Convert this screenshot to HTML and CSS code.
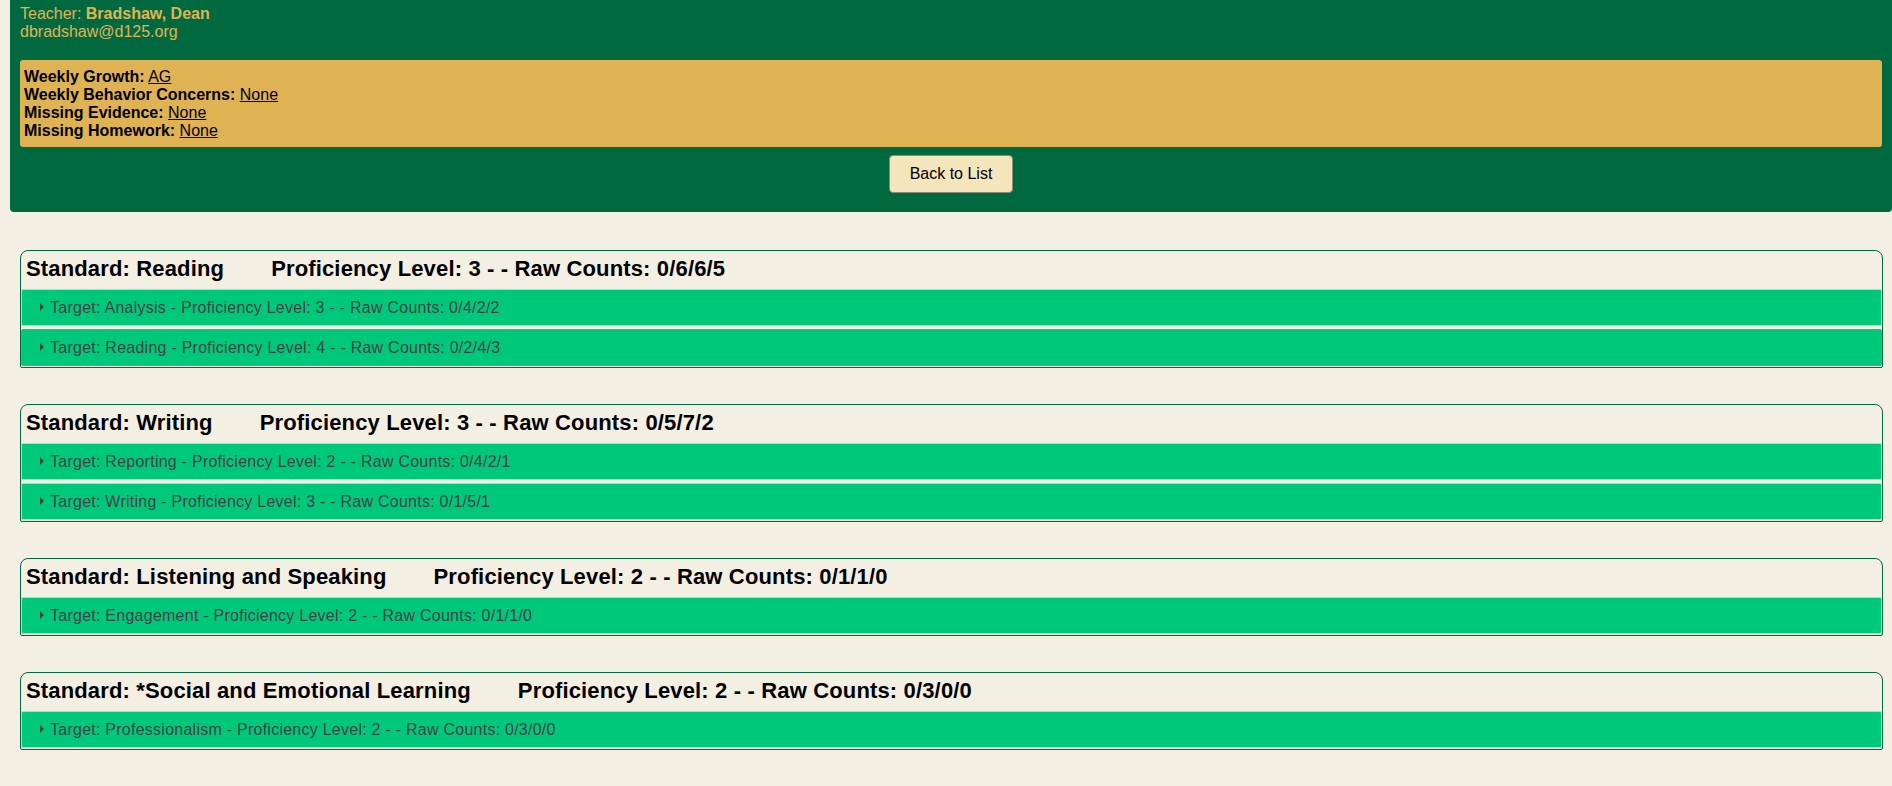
FILE: index.html
```html
<!DOCTYPE html>
<html lang="en">
<head>
<meta charset="utf-8">
<title>Student Standards</title>
<link rel="stylesheet" href="styles.css">
</head>
<body>
<div class="header">
  <div class="teacher">Teacher: <b>Bradshaw, Dean</b></div>
  <div class="teacher">dbradshaw@d125.org</div>
  <div class="alerts">
    <div><b>Weekly Growth:</b> <a href="#">AG</a></div>
    <div><b>Weekly Behavior Concerns:</b> <a href="#">None</a></div>
    <div><b>Missing Evidence:</b> <a href="#">None</a></div>
    <div><b>Missing Homework:</b> <a href="#">None</a></div>
  </div>
  <div class="actions"><button class="back">Back to List</button></div>
</div>

<div class="standards">
  <div class="card">
    <div class="card-head">Standard: Reading<span class="prof">Proficiency Level: 3 - - Raw Counts: 0/6/6/5</span></div>
    <div class="target"><span class="caret"></span>Target: Analysis - Proficiency Level: 3 - - Raw Counts: 0/4/2/2</div>
    <div class="target focused"><span class="caret"></span>Target: Reading - Proficiency Level: 4 - - Raw Counts: 0/2/4/3</div>
  </div>
  <div class="card">
    <div class="card-head">Standard: Writing<span class="prof">Proficiency Level: 3 - - Raw Counts: 0/5/7/2</span></div>
    <div class="target"><span class="caret"></span>Target: Reporting - Proficiency Level: 2 - - Raw Counts: 0/4/2/1</div>
    <div class="target"><span class="caret"></span>Target: Writing - Proficiency Level: 3 - - Raw Counts: 0/1/5/1</div>
  </div>
  <div class="card">
    <div class="card-head">Standard: Listening and Speaking<span class="prof">Proficiency Level: 2 - - Raw Counts: 0/1/1/0</span></div>
    <div class="target"><span class="caret"></span>Target: Engagement - Proficiency Level: 2 - - Raw Counts: 0/1/1/0</div>
  </div>
  <div class="card">
    <div class="card-head">Standard: *Social and Emotional Learning<span class="prof">Proficiency Level: 2 - - Raw Counts: 0/3/0/0</span></div>
    <div class="target"><span class="caret"></span>Target: Professionalism - Proficiency Level: 2 - - Raw Counts: 0/3/0/0</div>
  </div>
</div>
</body>
</html>
```
FILE: styles.css
```css
html, body {
  margin: 0;
  padding: 0;
  background: #f4efe3;
  font-family: "Liberation Sans", Arial, sans-serif;
  font-size: 16px;
  color: #000;
}

.header {
  margin-left: 10px;
  background: #006940;
  padding: 5px 10px 19px 10px;
  border-radius: 0 0 4px 4px;
}

.teacher {
  color: #e0b354;
  line-height: 18px;
}

.alerts {
  margin-top: 19px;
  background: #dfb253;
  border-radius: 3px;
  padding: 8px 4px 7px 4px;
  line-height: 18px;
}

.alerts a {
  color: #000;
  text-decoration: underline;
}

.actions {
  display: flex;
  justify-content: center;
  margin-top: 8px;
}

.back {
  font-family: "Liberation Sans", Arial, sans-serif;
  font-size: 16px;
  color: #000;
  background: #f4e5bd;
  border: 1px solid #8a8a7a;
  border-radius: 4px;
  height: 38px;
  padding: 0 20px;
}

.standards {
  padding: 38px 9px 0 20px;
  display: flex;
  flex-direction: column;
  gap: 36px;
}

.card {
  border: 1px solid #006940;
  border-radius: 8px 8px 2px 2px;
  padding-bottom: 1px;
  display: flex;
  flex-direction: column;
  gap: 3px;
}

.card-head {
  height: 38px;
  line-height: 36px;
  padding: 0 5px;
  font-size: 22px;
  font-weight: bold;
  letter-spacing: 0.15px;
  margin-bottom: -3px;
  white-space: nowrap;
}

.prof {
  margin-left: 47px;
}

.target {
  height: 37px;
  box-sizing: border-box;
  border: 1px solid #c9cdc6;
  background: #00c87b;
  color: #424246;
  line-height: 35px;
  letter-spacing: 0.25px;
  padding-left: 18px;
  display: flex;
  align-items: center;
  border-radius: 2px;
}

.target.focused {
  border-color: #5e93cf;
}

.caret {
  width: 0;
  height: 0;
  border-left: 4px solid #444;
  border-top: 4px solid transparent;
  border-bottom: 4px solid transparent;
  margin-right: 6px;
  margin-top: -1px;
}
```
